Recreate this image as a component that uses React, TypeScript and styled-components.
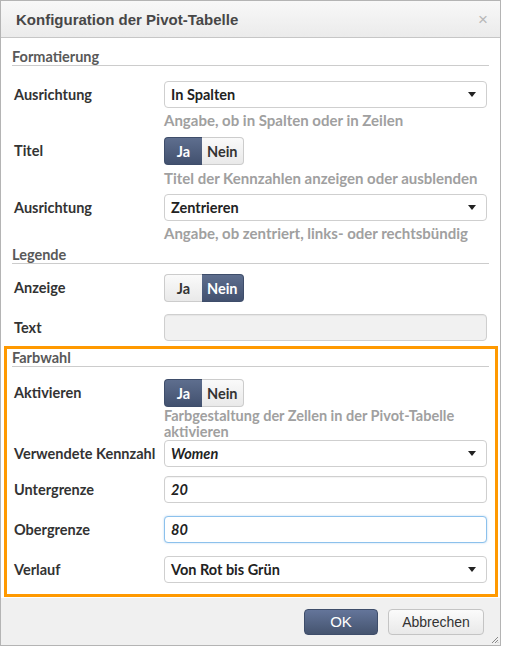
import styled, { createGlobalStyle, css } from 'styled-components';

const GlobalStyle = createGlobalStyle`
  html, body {
    margin: 0;
    padding: 0;
    background: #ffffff;
  }
  body {
    font-family: Lato, "Noto Sans", sans-serif;
  }
`;

const Dialog = styled.div`
  width: 499px;
  height: 644px;
  border: 1px solid #b4b4b4;
  display: flex;
  flex-direction: column;
  background: #fff;
  position: relative;
`;

const TitleBar = styled.div`
  height: 36px;
  flex: none;
  display: flex;
  align-items: center;
  justify-content: space-between;
  padding: 0 12px 0 15px;
  background: linear-gradient(180deg, #f8f8f8 0%, #ebebeb 100%);
  border-bottom: 1px solid #c6c6c6;
`;

const Title = styled.div`
  font-family: "Liberation Sans", Arial, sans-serif;
  font-weight: bold;
  font-size: 15px;
  color: #474747;
`;

const Close = styled.div`
  font-family: "Liberation Sans", Arial, sans-serif;
  font-size: 17px;
  color: #b8b8b8;
  line-height: 1;
`;

const Body = styled.div`
  flex: 1;
  padding: 0 11px 0 11px;
`;

const SectionHead = styled.div<{ $top?: number }>`
  margin-top: ${(p) => p.$top ?? 0}px;
  font-size: 14.5px;
  font-weight: bold;
  line-height: 17px;
  color: #595959;
  border-bottom: 1px solid #cccccc;
`;

const Row = styled.div<{ $top: number }>`
  display: grid;
  grid-template-columns: 152px 1fr;
  margin-top: ${(p) => p.$top}px;
`;

const Label = styled.div`
  height: 27px;
  display: flex;
  align-items: center;
  padding-left: 2px;
  font-size: 14.5px;
  font-weight: bold;
  color: #333;
  white-space: nowrap;
`;

const Control = styled.div`
  display: flex;
  flex-direction: column;
  align-items: flex-start;
  padding-right: 2px;
`;

const boxBase = css`
  box-sizing: border-box;
  width: 100%;
  height: 27px;
  border-radius: 4px;
  display: flex;
  align-items: center;
  padding: 0 10px 0 6px;
  font-size: 14.5px;
  font-weight: bold;
  color: #222;
`;

const Select = styled.div`
  ${boxBase};
  border: 1px solid #cfcfcf;
  justify-content: space-between;
  background: #fff;
`;

const Input = styled.div<{ $focus?: boolean; $disabled?: boolean }>`
  ${boxBase};
  border: 1px solid ${(p) => (p.$focus ? '#8cc1ec' : '#cfcfcf')};
  background: ${(p) => (p.$disabled ? '#f1f1f1' : '#fff')};
  font-style: italic;
  box-shadow: ${(p) => (p.$focus ? '0 0 2px rgba(100,170,230,0.5)' : 'inset 0 1px 1px rgba(0,0,0,0.05)')};
`;

const Value = styled.span<{ $italic?: boolean }>`
  font-style: ${(p) => (p.$italic ? 'italic' : 'normal')};
`;

const Help = styled.div<{ $top?: number }>`
  margin-top: ${(p) => p.$top ?? 4}px;
  font-size: 15px;
  font-weight: bold;
  line-height: 16px;
  color: #a0a0a0;
`;

const HelpLine = styled.div`
  height: 16px;
  overflow: visible;
  font-size: 14.5px;
`;

const Toggle = styled.div`
  display: flex;
  height: 28px;
`;

const ToggleBtn = styled.div<{ $active: boolean; $first?: boolean }>`
  box-sizing: border-box;
  height: 28px;
  padding: 0 ${(p) => (p.$first ? 11 : 5)}px;
  min-width: ${(p) => (p.$first ? 38 : 39)}px;
  display: flex;
  align-items: center;
  justify-content: center;
  font-size: 14.5px;
  font-weight: bold;
  border: 1px solid ${(p) => (p.$active ? '#3e4d6a' : '#cccccc')};
  border-radius: ${(p) => (p.$first ? '4px 0 0 4px' : '0 4px 4px 0')};
  ${(p) => (p.$first ? 'border-right: none;' : 'border-left: none;')}
  color: ${(p) => (p.$active ? '#ffffff' : '#333333')};
  background: ${(p) =>
    p.$active
      ? 'linear-gradient(180deg, #5e6e8e 0%, #42516f 100%)'
      : 'linear-gradient(180deg, #fafafa 0%, #e9e9e9 100%)'};
`;

const Highlight = styled.div`
  margin: 5px -9px 0 -8px;
  padding: 0 6px 11px 5px;
  border: 3px solid #ff9900;
`;

const Footer = styled.div`
  height: 47px;
  flex: none;
  background: #f0f0f0;
  display: flex;
  align-items: center;
  justify-content: flex-end;
  gap: 10px;
  padding: 0 16px 0 0;
  margin-top: 1px;
`;

const Button = styled.div<{ $primary?: boolean }>`
  box-sizing: border-box;
  height: 26px;
  width: ${(p) => (p.$primary ? 74 : 96)}px;
  border-radius: 4px;
  display: flex;
  align-items: center;
  justify-content: center;
  font-family: "Liberation Sans", Arial, sans-serif;
  font-size: ${(p) => (p.$primary ? 15 : 14)}px;
  color: ${(p) => (p.$primary ? '#fff' : '#333')};
  border: 1px solid ${(p) => (p.$primary ? '#3e4d6a' : '#c4c4c4')};
  background: ${(p) =>
    p.$primary
      ? 'linear-gradient(180deg, #64759a 0%, #45546f 100%)'
      : 'linear-gradient(180deg, #fbfbfb 0%, #e9e9e9 100%)'};
`;

const Grip = styled.svg`
  position: absolute;
  right: 1px;
  bottom: 1px;
`;

function Arrow() {
  return (
    <svg width="8" height="5" viewBox="0 0 8 5">
      <path d="M0 0 L8 0 L4 5 Z" fill="#222" />
    </svg>
  );
}

function YesNo({ yes }: { yes: boolean }) {
  return (
    <Toggle>
      <ToggleBtn $first $active={yes}>Ja</ToggleBtn>
      <ToggleBtn $active={!yes}>Nein</ToggleBtn>
    </Toggle>
  );
}

export default function App() {
  return (
    <>
      <GlobalStyle />
      <Dialog>
        <TitleBar>
          <Title>Konfiguration der Pivot-Tabelle</Title>
          <Close>×</Close>
        </TitleBar>
        <Body>
          <SectionHead $top={10}>Formatierung</SectionHead>
          <Row $top={15}>
            <Label>Ausrichtung</Label>
            <Control>
              <Select>
                <Value>In Spalten</Value>
                <Arrow />
              </Select>
              <Help>Angabe, ob in Spalten oder in Zeilen</Help>
            </Control>
          </Row>
          <Row $top={9}>
            <Label>Titel</Label>
            <Control>
              <YesNo yes />
              <Help $top={5}>Titel der Kennzahlen anzeigen oder ausblenden</Help>
            </Control>
          </Row>
          <Row $top={8}>
            <Label>Ausrichtung</Label>
            <Control>
              <Select>
                <Value>Zentrieren</Value>
                <Arrow />
              </Select>
              <Help>Angabe, ob zentriert, links- oder rechtsbündig</Help>
            </Control>
          </Row>
          <SectionHead $top={5}>Legende</SectionHead>
          <Row $top={10}>
            <Label>Anzeige</Label>
            <Control>
              <YesNo yes={false} />
            </Control>
          </Row>
          <Row $top={12}>
            <Label>Text</Label>
            <Control>
              <Input $disabled />
            </Control>
          </Row>
          <Highlight>
            <SectionHead>Farbwahl</SectionHead>
            <Row $top={12}>
              <Label>Aktivieren</Label>
              <Control>
                <YesNo yes />
                <Help $top={1}>
                  <HelpLine>Farbgestaltung der Zellen in der Pivot-Tabelle</HelpLine>
                  <HelpLine>aktivieren</HelpLine>
                </Help>
              </Control>
            </Row>
            <Row $top={0}>
              <Label>Verwendete Kennzahl</Label>
              <Control>
                <Select>
                  <Value $italic>Women</Value>
                  <Arrow />
                </Select>
              </Control>
            </Row>
            <Row $top={9}>
              <Label>Untergrenze</Label>
              <Control>
                <Input>20</Input>
              </Control>
            </Row>
            <Row $top={13}>
              <Label>Obergrenze</Label>
              <Control>
                <Input $focus>80</Input>
              </Control>
            </Row>
            <Row $top={13}>
              <Label>Verlauf</Label>
              <Control>
                <Select>
                  <Value>Von Rot bis Grün</Value>
                  <Arrow />
                </Select>
              </Control>
            </Row>
          </Highlight>
        </Body>
        <Footer>
          <Button $primary>OK</Button>
          <Button>Abbrechen</Button>
        </Footer>
        <Grip width="8" height="8" viewBox="0 0 8 8">
          <path d="M7 1 L1 7 M7 4 L4 7 M7 6.5 L6.5 7" stroke="#888" strokeWidth="1" />
        </Grip>
      </Dialog>
    </>
  );
}
